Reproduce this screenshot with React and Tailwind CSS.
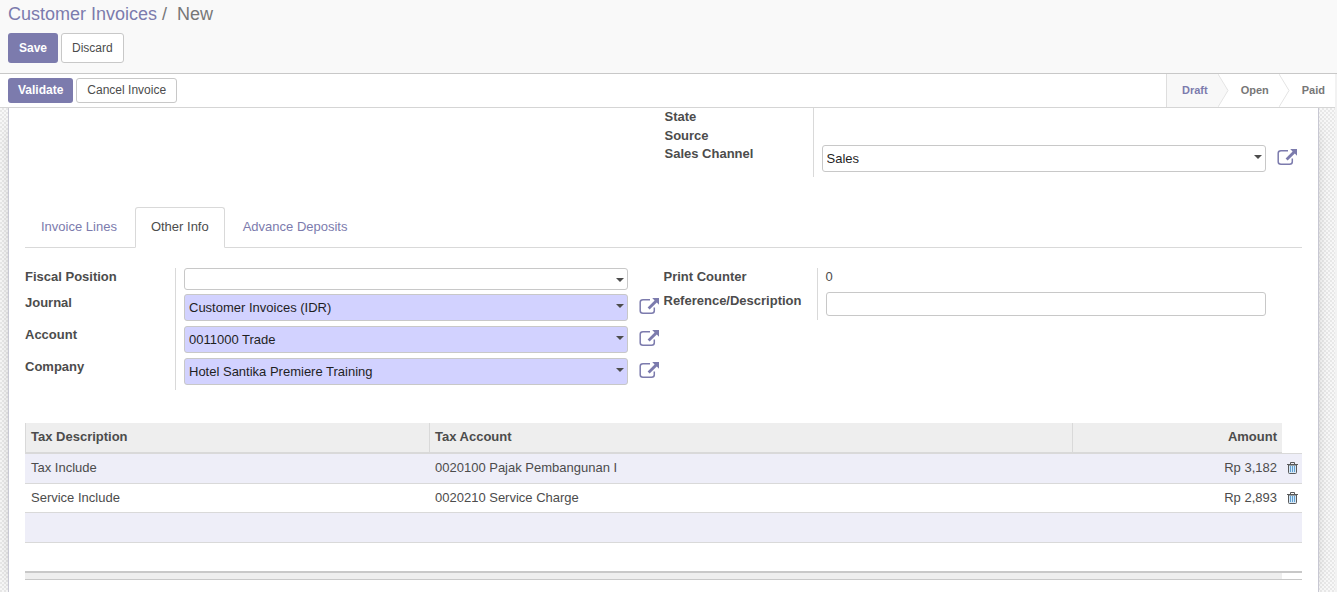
import React, { useState } from 'react';

const STATES = ['Draft', 'Open', 'Paid'];
const TABS = ['Invoice Lines', 'Other Info', 'Advance Deposits'];

const ACCOUNTING_FIELDS = [
  { id: 'journal', label: 'Journal', value: 'Customer Invoices (IDR)' },
  { id: 'account', label: 'Account', value: '0011000 Trade' },
  { id: 'company', label: 'Company', value: 'Hotel Santika Premiere Training' },
];

const TAX_LINES = [
  { description: 'Tax Include', account: '0020100 Pajak Pembangunan I', amount: 'Rp 3,182' },
  { description: 'Service Include', account: '0020210 Service Charge', amount: 'Rp 2,893' },
];

const ExternalLink = ({ label }) => (
  <button type="button" aria-label={label} className="mb-1 ml-[11px] shrink-0 text-[#7c7bad]">
    <svg width="20" height="18" viewBox="0 0 20 18" fill="none" className="block">
      <path
        d="M11 2.7H4Q1.2 2.7 1.2 5.2V13.8Q1.2 16.3 4 16.3H12.5Q15.3 16.3 15.3 13.8V10.5"
        stroke="currentColor"
        strokeWidth="1.5"
      />
      <path d="M13.2 1H20V7.8L17.8 5.6L10.6 12.4L8.6 10.4L15.6 3.4Z" fill="currentColor" />
    </svg>
  </button>
);

const TrashIcon = () => (
  <svg width="11" height="12" viewBox="0 0 11 12" fill="none" className="block">
    <path d="M1.5 3H9.5V10.5Q9.5 11.5 8.5 11.5H2.5Q1.5 11.5 1.5 10.5Z" fill="#d5e8f8" stroke="#5a5a5a" />
    <path d="M0 2.5H11M3.5 2V0.5H7.5V2" stroke="#5a5a5a" />
    <path d="M3.5 4V10M5.5 4V10M7.5 4V10" stroke="#5f9fd0" />
  </svg>
);

const SelectField = ({ id, value, required, short }) => (
  <div className="relative min-w-0 flex-1">
    <select
      id={id}
      defaultValue={value}
      className={`block w-full appearance-none rounded-[3px] border border-[#c8c8c8] pr-5 pl-1 text-[13px] leading-4 text-[#1f1f1f] ${
        required ? 'bg-[#d2d2ff]' : 'bg-white'
      } ${short ? 'h-[22px]' : 'h-[27px]'}`}
    >
      <option value={value}>{value}</option>
    </select>
    <svg
      width="8"
      height="4"
      viewBox="0 0 8 4"
      className="pointer-events-none absolute top-[10px] right-1"
    >
      <path d="M0 0H8L4 4Z" fill="#4c4c4c" />
    </svg>
  </div>
);

const StatusArrow = ({ filled }) => (
  <svg width="11" height="33" viewBox="0 0 11 33" fill="none" className="block">
    {filled && <path d="M0 0L10 16.5L0 33Z" fill="#f8f8f8" />}
    <path d="M0 0L10 16.5L0 33" stroke="#e4e4e4" />
  </svg>
);

const App = () => {
  const [activeTab, setActiveTab] = useState('Other Info');
  const [reference, setReference] = useState('');

  return (
    <div className="flex h-screen flex-col overflow-hidden bg-[#f2f2f2] font-['Liberation_Sans',Arial,sans-serif] text-[13px] leading-[18px] text-[#4c4c4c]">
      <header className="shrink-0 border-b border-[#c8c8c8] bg-[#f9f9f9] px-2 pb-[10px]">
        <nav className="flex h-[33px] gap-[5px] pt-[2px] text-[18px] leading-6">
          <a href="#invoices" className="text-[#7c7bad]">Customer Invoices</a>
          <span className="text-[#777777]">/</span>
          <span className="pl-[5px] text-[#777777]">New</span>
        </nav>
        <div className="flex gap-[3px] text-[12px]">
          <button type="button" className="h-[30px] rounded-[3px] bg-[#7c7bad] px-[11px] font-bold text-white">
            Save
          </button>
          <button type="button" className="h-[30px] rounded-[3px] border border-[#c8c8c8] bg-white px-[10px]">
            Discard
          </button>
        </div>
      </header>

      <div className="mr-[2px] flex shrink-0 items-center justify-between border-b border-[#d5d5d5] bg-white pl-2">
        <div className="flex gap-[3px] text-[12px]">
          <button type="button" className="h-[25px] rounded-[3px] bg-[#7c7bad] px-[10px] pb-[2px] font-bold text-white">
            Validate
          </button>
          <button type="button" className="h-[25px] rounded-[3px] border border-[#c8c8c8] bg-white px-[10px] pb-[2px]">
            Cancel Invoice
          </button>
        </div>
        <ol className="flex h-[33px] text-[11px] font-bold text-[#777777]">
          {STATES.map((state, index) => (
            <li key={state} className="flex">
              <span
                className={`flex items-center pr-[10px] pb-[2px] ${
                  index === 0 ? 'border-l border-[#dedede] bg-[#f8f8f8] pl-[15px] text-[#7c7bad]' : 'pl-3'
                }`}
              >
                {state}
              </span>
              {index < STATES.length - 1 && <StatusArrow filled={index === 0} />}
            </li>
          ))}
        </ol>
      </div>

      <main className="mr-[2px] flex min-h-0 flex-1 overflow-hidden bg-[repeating-conic-gradient(#e8e8e8_0_25%,#f8f8f8_0_50%)] bg-[length:4px_4px] pr-4 pl-2">
        <div className="flex-1 border-x border-[#c8c8d3] bg-white px-4 shadow-[0_5px_20px_-15px_#000000]">
          <section className="flex justify-end">
            <div className="flex w-1/2 pl-px">
              <div className="w-[148px] shrink-0 font-bold">
                <div className="h-[19px]">State</div>
                <div className="h-[18px]">Source</div>
                <label htmlFor="channel" className="block">Sales Channel</label>
              </div>
              <div className="flex min-w-0 flex-1 items-center border-l border-[#d9d9d9] pt-[37px] pr-[5px] pb-[5px] pl-2">
                <SelectField id="channel" value="Sales" />
                <ExternalLink label="Open Sales Channel" />
              </div>
            </div>
          </section>

          <div role="tablist" className="mt-[30px] flex gap-[2px] border-b border-[#d9d9d9]">
            {TABS.map((tab) => (
              <button
                key={tab}
                type="button"
                role="tab"
                aria-selected={tab === activeTab}
                onClick={() => setActiveTab(tab)}
                className={`-mb-px h-[41px] rounded-t-[3px] border px-[15px] pb-[2px] ${
                  tab === activeTab
                    ? 'border-[#d9d9d9] border-b-white bg-white text-[#4c4c4c]'
                    : 'border-transparent text-[#7c7bad]'
                }`}
              >
                {tab}
              </button>
            ))}
          </div>

          <section className="mt-5 flex items-start">
            <div className="w-1/2 pr-[5px]">
              <div className="flex">
                <label htmlFor="fiscal" className="w-[150px] shrink-0 font-bold">Fiscal Position</label>
                <div className="flex min-w-0 flex-1 border-l border-[#d9d9d9] pr-[31px] pb-1 pl-2">
                  <SelectField id="fiscal" value="" short />
                </div>
              </div>
              {ACCOUNTING_FIELDS.map((field) => (
                <div key={field.id} className="flex">
                  <label htmlFor={field.id} className="w-[150px] shrink-0 font-bold">{field.label}</label>
                  <div className="flex min-w-0 flex-1 items-center border-l border-[#d9d9d9] pb-[5px] pl-2">
                    <SelectField id={field.id} value={field.value} required />
                    <ExternalLink label={`Open ${field.label}`} />
                  </div>
                </div>
              ))}
            </div>
            <div className="w-1/2">
              <div className="flex">
                <div className="w-[153px] shrink-0 font-bold">Print Counter</div>
                <div className="h-6 flex-1 border-l border-[#d9d9d9] pl-2">0</div>
              </div>
              <div className="flex">
                <label htmlFor="reference" className="w-[153px] shrink-0 font-bold">Reference/Description</label>
                <div className="flex-1 border-l border-[#d9d9d9] pr-9 pb-1 pl-2">
                  <input
                    id="reference"
                    type="text"
                    value={reference}
                    onChange={(e) => setReference(e.target.value)}
                    className="block h-6 w-full rounded-[3px] border border-[#c8c8c8] bg-white px-1"
                  />
                </div>
              </div>
            </div>
          </section>

          <table className="mt-[33px] w-full table-fixed border-separate border-spacing-0">
            <colgroup>
              <col className="w-[404px]" />
              <col />
              <col className="w-[210px]" />
              <col className="w-5" />
            </colgroup>
            <thead>
              <tr className="h-[31px] text-left">
                <th className="border-b-2 border-l border-[#d9d9d9] bg-[#eeeeee] px-[5px] pb-px">Tax Description</th>
                <th className="border-b-2 border-l border-[#d9d9d9] bg-[#eeeeee] px-[5px] pb-px">Tax Account</th>
                <th className="border-b-2 border-l border-[#d9d9d9] bg-[#eeeeee] px-[5px] pb-px text-right">Amount</th>
                <td className="border-b border-[#d9d9d9]" />
              </tr>
            </thead>
            <tbody>
              {TAX_LINES.map((line) => (
                <tr key={line.description} className="h-[30px] odd:bg-[#eeeef8] even:h-[29px]">
                  <td className="border-b border-[#d9d9d9] pr-[5px] pb-px pl-[6px]">{line.description}</td>
                  <td className="border-b border-[#d9d9d9] pr-[5px] pb-px pl-[6px]">{line.account}</td>
                  <td className="border-b border-[#d9d9d9] pr-[5px] pb-px pl-[6px] text-right">{line.amount}</td>
                  <td className="border-b border-[#d9d9d9] pb-px pl-[5px]">
                    <button type="button" aria-label={`Delete ${line.description}`} className="block">
                      <TrashIcon />
                    </button>
                  </td>
                </tr>
              ))}
              <tr className="h-[30px] bg-[#eeeef8]">
                <td colSpan={4} className="border-b border-[#d9d9d9]" />
              </tr>
              <tr className="h-[30px]">
                <td colSpan={4} className="border-b-2 border-[#c8c8c8]" />
              </tr>
            </tbody>
            <tfoot>
              <tr className="h-[7px]">
                <td colSpan={3} className="border-b border-[#c8c8c8] bg-[#eeeeee]" />
                <td className="border-b border-[#c8c8c8]" />
              </tr>
            </tfoot>
          </table>
        </div>
      </main>
    </div>
  );
};

export default App;
